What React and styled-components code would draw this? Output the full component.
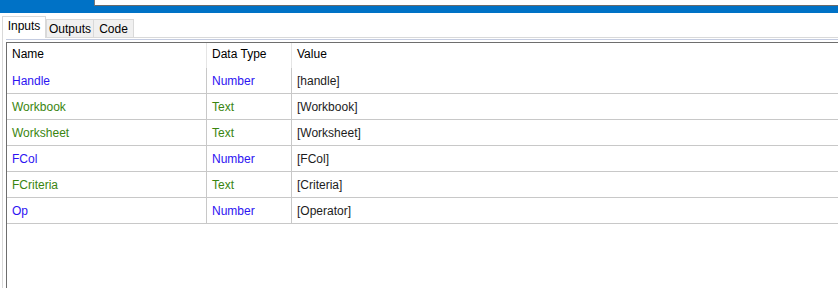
import React from 'react'
import styled, { createGlobalStyle } from 'styled-components';

const GlobalStyle = createGlobalStyle`
    html, body {
        margin: 0;
        padding: 0;
        background: #ffffff;
        overflow: hidden;
    }
    body {
        font-family: "Liberation Sans", Arial, sans-serif;
        font-size: 12px;
    }
`;

const args = [
    { id: 1, name: 'Handle', type: 'Number', value: '[handle]' },
    { id: 2, name: 'Workbook', type: 'Text', value: '[Workbook]' },
    { id: 3, name: 'Worksheet', type: 'Text', value: '[Worksheet]' },
    { id: 4, name: 'FCol', type: 'Number', value: '[FCol]' },
    { id: 5, name: 'FCriteria', type: 'Text', value: '[Criteria]' },
    { id: 6, name: 'Op', type: 'Number', value: '[Operator]' },
];

const tabs = [
    { label: 'Inputs', width: 44 },
    { label: 'Outputs', width: 48 },
    { label: 'Code', width: 41 },
];

function App() {
    return (
        <>
            <GlobalStyle />
            <PageStyled>
                <TopBar>
                    <Field />
                </TopBar>
                <TabStrip>
                    {tabs.map((t, i) => (
                        <Tab key={t.label} $active={i === 0} $w={t.width}>{t.label}</Tab>
                    ))}
                </TabStrip>
                <Panel>
                    <Grid>
                        <HeaderRow>
                            <HeadCell $w={200}>Name</HeadCell>
                            <HeadCell $w={85}>Data Type</HeadCell>
                            <HeadCell $last>Value</HeadCell>
                        </HeaderRow>
                        {args.map((a) => (
                            <Row key={a.id}>
                                <Cell $w={200} $kind={a.type}>{a.name}</Cell>
                                <Cell $w={85} $kind={a.type}>{a.type}</Cell>
                                <Cell $last>{a.value}</Cell>
                            </Row>
                        ))}
                    </Grid>
                </Panel>
            </PageStyled>
        </>
    )
}

const colorFor = (kind) => {
    if (kind === 'Number') return '#2d14f2';
    if (kind === 'Text') return '#3a8510';
    return '#1c1c1c';
};

const PageStyled = styled.div`
    width: 838px;
    height: 288px;
    display: flex;
    flex-direction: column;
    overflow: hidden;
`;

const TopBar = styled.div`
    height: 13px;
    background: #0072c6;
    display: flex;
    align-items: flex-start;
    padding-left: 94px;
    flex-shrink: 0;
`;

const Field = styled.div`
    flex: 1;
    height: 5px;
    background: #ffffff;
    border-left: 1px solid #7a7a7a;
    border-bottom: 1px solid #6a6a6a;
`;

const TabStrip = styled.div`
    height: 24px;
    display: flex;
    align-items: flex-end;
    padding-left: 2px;
    flex-shrink: 0;
`;

const Tab = styled.div`
    width: ${({ $w }) => $w}px;
    height: ${({ $active }) => ($active ? '22px' : '18px')};
    margin-right: ${({ $active }) => ($active ? '0' : '-1px')};
    display: flex;
    align-items: center;
    justify-content: center;
    box-sizing: border-box;
    background: ${({ $active }) => ($active ? '#ffffff' : '#f0f0f0')};
    border: 1px solid #d9d9d9;
    border-bottom: none;
    color: #000000;
    white-space: nowrap;
    position: relative;
    z-index: ${({ $active }) => ($active ? 2 : 1)};
    margin-bottom: ${({ $active }) => ($active ? '-1px' : '0')};
    padding-bottom: ${({ $active }) => ($active ? '3px' : '0')};
`;

const Panel = styled.div`
    flex: 1;
    margin-left: 2px;
    border-top: 1px solid #d9d9d9;
    border-left: 1px solid #d9d9d9;
    padding: 1px 0 0 3px;
    display: flex;
    flex-direction: column;
    &::before {
        content: '';
        display: block;
        height: 1px;
        background: #c3cbe0;
        margin-bottom: 2px;
    }
`;

const Grid = styled.div`
    flex: 1;
    border-top: 1px solid #6e6e6e;
    border-left: 1px solid #6e6e6e;
    display: flex;
    flex-direction: column;
`;

const HeaderRow = styled.div`
    height: 25px;
    display: flex;
    flex-shrink: 0;
`;

const HeadCell = styled.div`
    ${({ $last, $w }) => ($last ? 'flex: 1;' : `width: ${$w}px; border-right: 1px solid #e5e5e5;`)}
    flex-shrink: 0;
    padding: 3px 0 0 5px;
    box-sizing: border-box;
    color: #000000;
    line-height: 16px;
`;

const Row = styled.div`
    height: 26px;
    display: flex;
    border-bottom: 1px solid #c8c8c8;
    box-sizing: border-box;
    flex-shrink: 0;
`;

const Cell = styled.div`
    ${({ $last, $w }) => ($last ? 'flex: 1;' : `width: ${$w}px; border-right: 1px solid #c8c8c8;`)}
    flex-shrink: 0;
    box-sizing: border-box;
    padding: 0 0 0 5px;
    display: flex;
    align-items: center;
    color: ${({ $kind }) => colorFor($kind)};
`;

export default App;
